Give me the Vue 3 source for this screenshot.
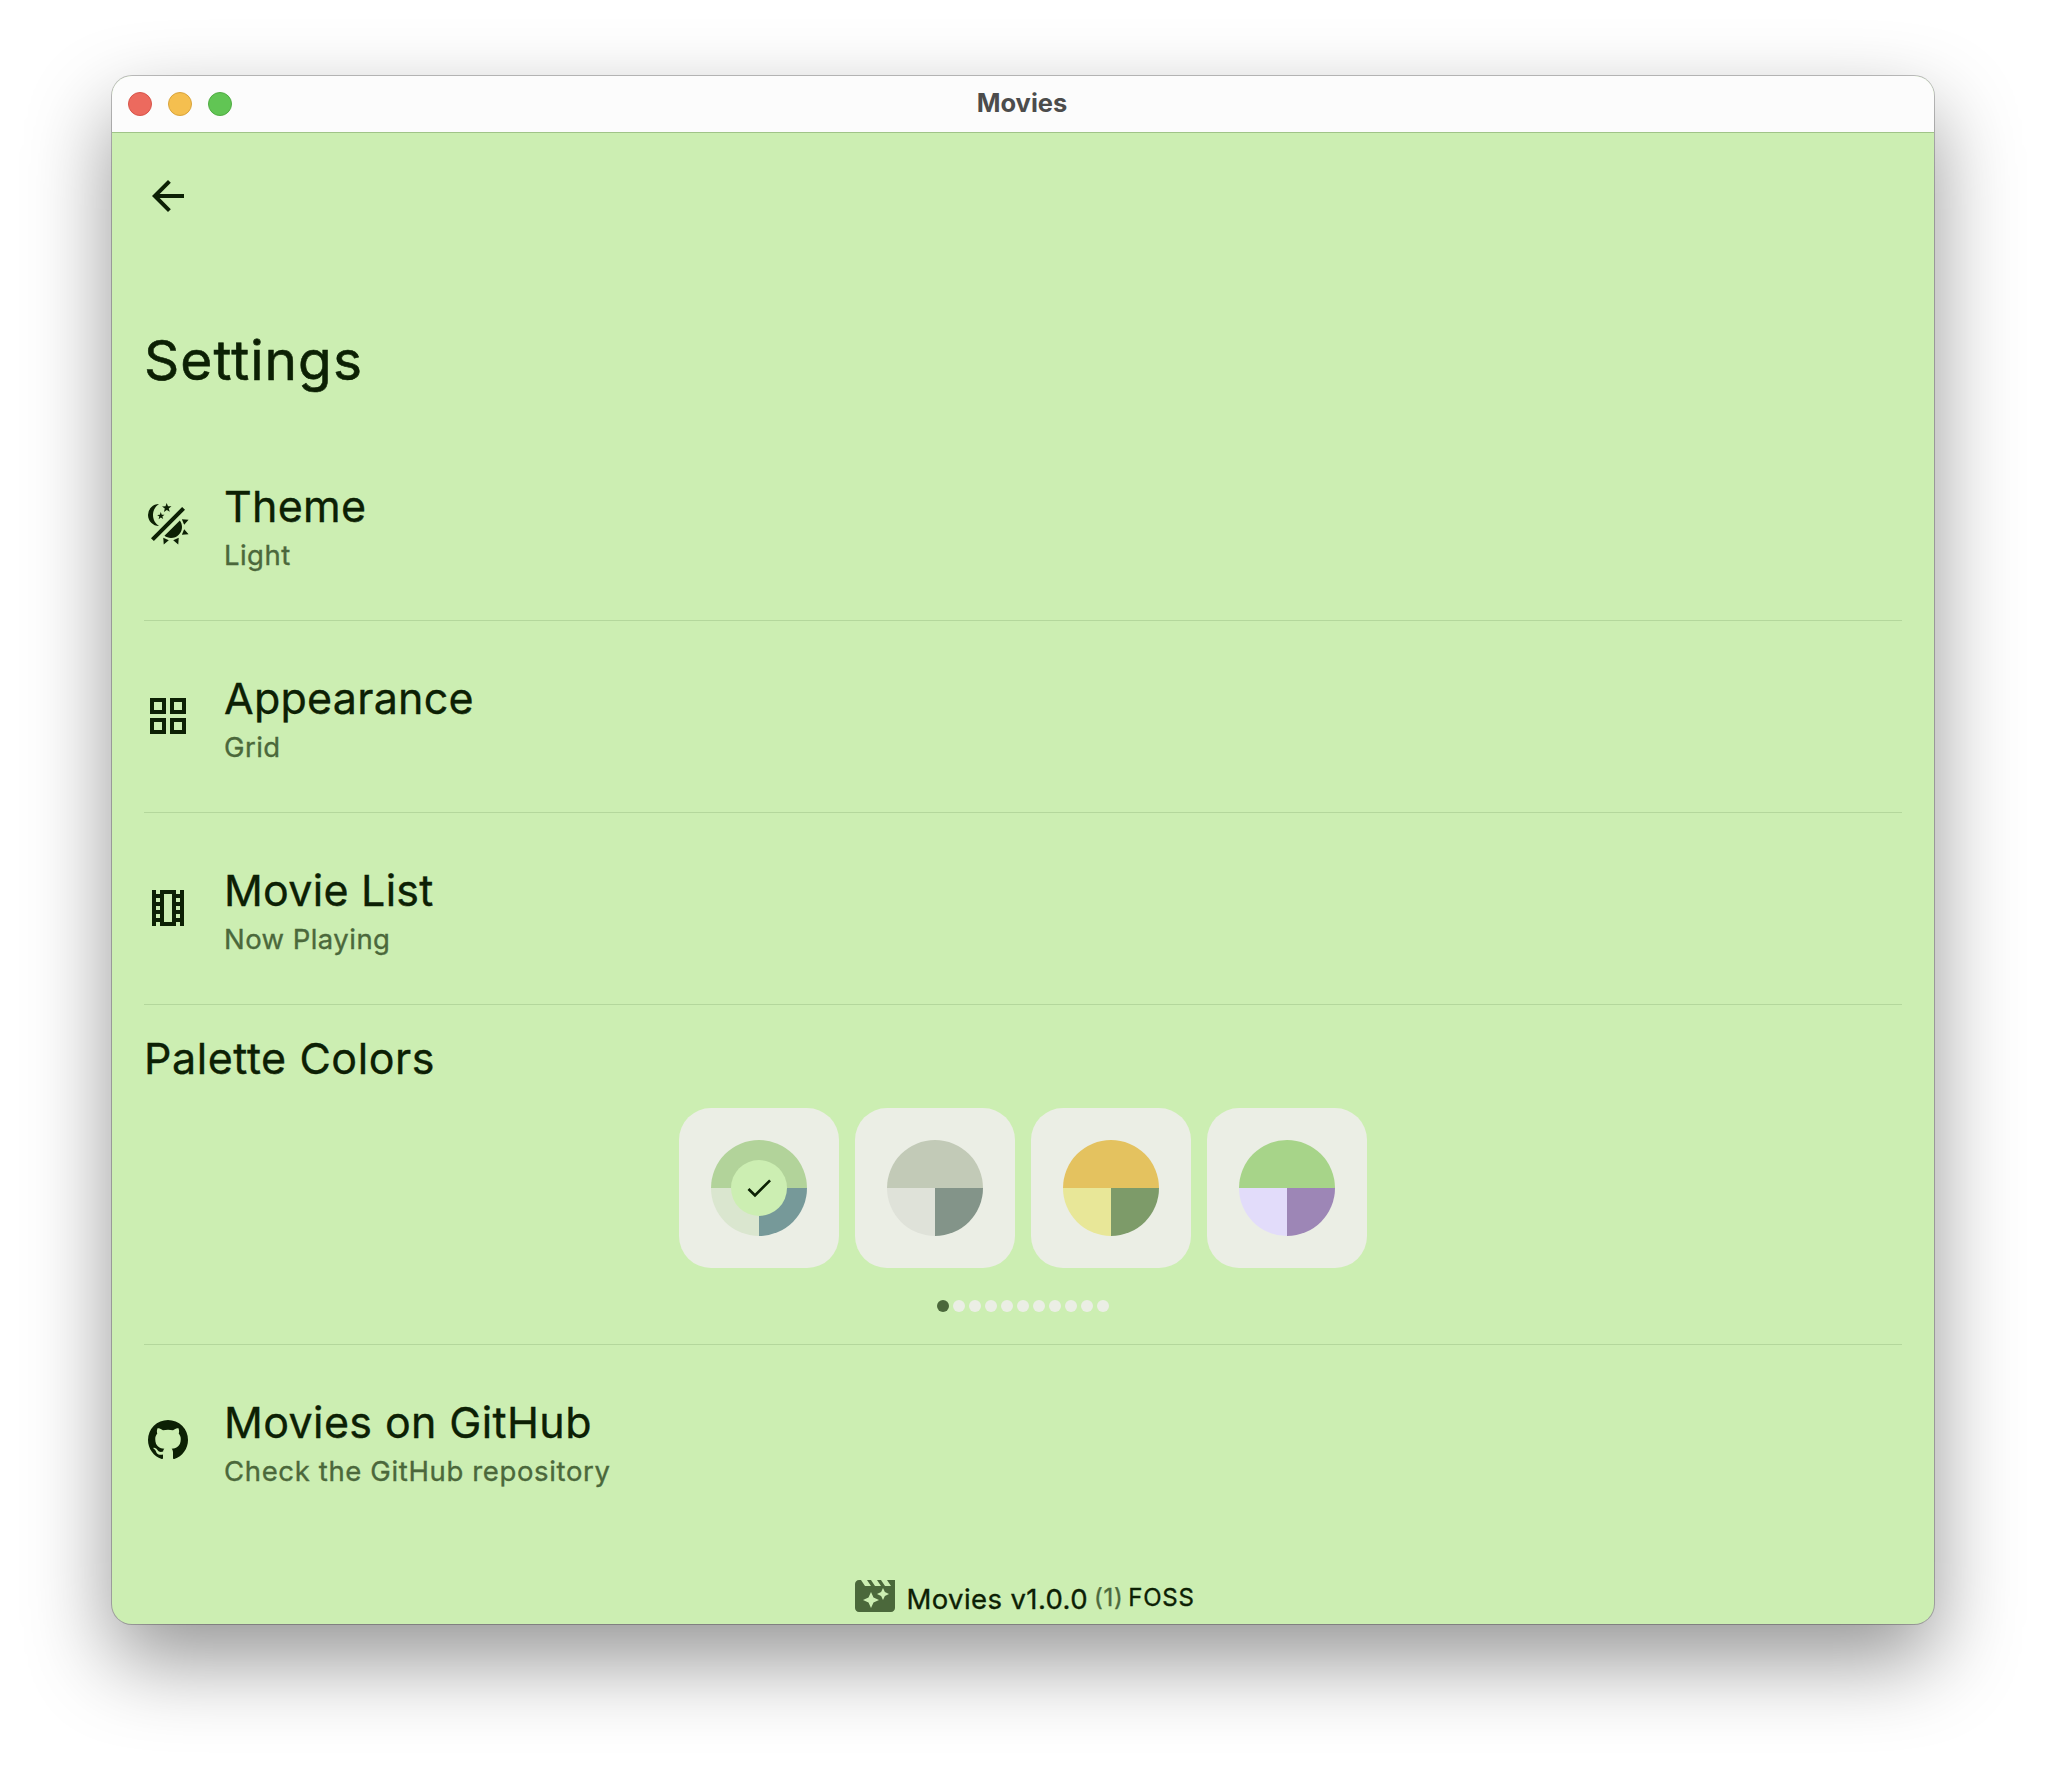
<script setup>
const palettes = [
  { top: '#b2d39a', left: '#dae6cf', right: '#769999', selected: true },
  { top: '#c2cab7', left: '#dfe2d9', right: '#839489' },
  { top: '#e4c25f', left: '#e8e798', right: '#7d9b69' },
  { top: '#a7d489', left: '#e2dcfa', right: '#9d86b6' },
]
const pages = 11
</script>

<template>
  <div class="desktop">
    <main class="window">
      <header class="titlebar">
        <div class="lights"><i class="red"></i><i class="yellow"></i><i class="green"></i></div>
        <span class="title">Movies</span>
      </header>
      <section class="content">
        <nav class="appbar">
          <svg width="48" height="48" viewBox="0 0 24 24"><path d="M20 11H7.83l5.59-5.59L12 4l-8 8 8 8 1.41-1.41L7.83 13H20v-2z" /></svg>
        </nav>
        <h1>Settings</h1>
        <div class="item">
          <svg width="48" height="48" viewBox="0 0 24 24">
            <path d="M7.5 2c-1.79 1.15-3 3.18-3 5.5s1.21 4.35 3.03 5.5C4.46 13 2 10.54 2 7.5A5.5 5.5 0 0 1 7.5 2m11.57 1.5 1.43 1.43L4.93 20.5 3.5 19.07 19.07 3.5m-6.18 2.43L11.41 5 9.97 6l.42-1.7L9 3.24l1.75-.12.58-1.65L12 3.1l1.73.03-1.35 1.13.51 1.67m-3.3 3.61-1.16-.73-1.12.78.34-1.32-1.09-.83 1.36-.09.45-1.29.51 1.27 1.36.03-1.05.87.4 1.31M19 13.5a5.5 5.5 0 0 1-5.5 5.5c-1.22 0-2.35-.4-3.26-1.07l7.69-7.69c.67.91 1.07 2.04 1.07 3.26m-4.4 6.58 2.77-1.15-.24 3.35-2.53-2.2m4.33-2.7 1.15-2.77 2.2 2.54-3.35.23m1.15-4.96-1.14-2.78 3.34.24-2.2 2.54M9.63 18.93l2.77 1.15-2.53 2.19-.24-3.34Z" />
          </svg>
          <div class="labels"><h2>Theme</h2><p>Light</p></div>
        </div>
        <div class="item">
          <svg width="48" height="48" viewBox="0 0 24 24"><path fill-rule="evenodd" d="M3 3v8h8V3H3zm6 6H5V5h4v4zm-6 4v8h8v-8H3zm6 6H5v-4h4v4zm4-16v8h8V3h-8zm6 6h-4V5h4v4zm-6 4v8h8v-8h-8zm6 6h-4v-4h4v4z" /></svg>
          <div class="labels"><h2>Appearance</h2><p>Grid</p></div>
        </div>
        <div class="item">
          <svg width="48" height="48" viewBox="0 0 24 24"><path fill-rule="evenodd" d="M14 5v14h-4V5h4m6-2h-2v2h-2V3H8v2H6V3H4v18h2v-2h2v2h8v-2h2v2h2V3zm-4 6V7h2v2h-2zM6 9V7h2v2H6zm10 4v-2h2v2h-2zM6 13v-2h2v2H6zm10 4v-2h2v2h-2zM6 17v-2h2v2H6z" /></svg>
          <div class="labels"><h2>Movie List</h2><p>Now Playing</p></div>
        </div>
        <section class="palette">
          <h2>Palette Colors</h2>
          <div class="cards">
            <div v-for="(p, i) in palettes" :key="i" class="card">
              <svg width="96" height="96" viewBox="0 0 96 96">
                <path :fill="p.top" d="M0 48a48 48 0 0 1 96 0z" />
                <path :fill="p.left" d="M0 48a48 48 0 0 0 48 48V48z" />
                <path :fill="p.right" d="M96 48a48 48 0 0 1-48 48V48z" />
                <template v-if="p.selected">
                  <circle cx="48" cy="48" r="28" fill="#cceeb2" />
                  <path transform="translate(32 32) scale(1.3333)" d="M9 16.17 4.83 12l-1.42 1.41L9 19 21 7l-1.41-1.41z" />
                </template>
              </svg>
            </div>
          </div>
          <div class="dots"><i v-for="n in pages" :key="n" :class="{ on: n === 1 }"></i></div>
        </section>
        <div class="item last">
          <svg width="48" height="48" viewBox="0 0 24 24"><path d="M12 2A10 10 0 0 0 2 12c0 4.42 2.87 8.17 6.84 9.5.5.08.66-.23.66-.5v-1.69c-2.77.6-3.36-1.34-3.36-1.34-.46-1.16-1.11-1.47-1.11-1.47-.91-.62.07-.6.07-.6 1 .07 1.53 1.03 1.53 1.03.87 1.52 2.34 1.07 2.91.83.09-.65.35-1.09.63-1.34-2.22-.25-4.55-1.11-4.55-4.92 0-1.11.38-2 1.03-2.71-.1-.25-.45-1.29.1-2.64 0 0 .84-.27 2.75 1.02.79-.22 1.65-.33 2.5-.33s1.71.11 2.5.33c1.91-1.29 2.75-1.02 2.75-1.02.55 1.35.2 2.39.1 2.64.65.71 1.03 1.6 1.03 2.71 0 3.82-2.34 4.66-4.57 4.91.36.31.69.92.69 1.85V21c0 .27.16.59.67.5C19.14 20.16 22 16.42 22 12A10 10 0 0 0 12 2z" /></svg>
          <div class="labels"><h2>Movies on GitHub</h2><p>Check the GitHub repository</p></div>
        </div>
        <footer>
          <svg width="40" height="32" viewBox="2 4 20 16">
            <path fill="#4b683b" d="M18 4l2 3h-3l-2-3h-2l2 3h-3l-2-3H8l2 3H7L5 4H4c-1.1 0-1.99.9-1.99 2L2 18c0 1.1.9 2 2 2h16c1.1 0 2-.9 2-2V4h-4zm-6.75 11.25L10 18l-1.25-2.75L6 14l2.75-1.25L10 10l1.25 2.75L14 14l-2.75 1.25zm5.69-3.31L16 14l-.94-2.06L13 11l2.06-.94L16 8l.94 2.06L19 11l-2.06.94z" />
          </svg>
          <span class="ver">Movies v1.0.0</span><span class="build">(1)</span><span class="foss">FOSS</span>
        </footer>
      </section>
    </main>
  </div>
</template>

<style>
body { background: #fff; overflow: hidden; }
</style>

<style scoped>
* { box-sizing: border-box; }
h1, h2, p { margin: 0; font-weight: 400; white-space: nowrap; }
svg { display: block; flex: none; fill: #0c2004; }
.desktop { width: 2046px; height: 1772px; padding: 76px 112px 148px; background: #fff; overflow: hidden; font-family: Inter, "Liberation Sans", sans-serif; color: #0c2004; }
.window { height: 1548px; border-radius: 20px; background: #cceeb2; display: flex; flex-direction: column; box-shadow: 0 0 0 1px rgba(0,0,0,.24), 0 36px 84px rgba(0,0,0,.42); }
.titlebar { height: 57px; flex: none; background: #fcfcfc; border-bottom: 1px solid #a0c488; border-radius: 20px 20px 0 0; display: grid; grid-template-columns: 1fr auto 1fr; align-items: center; padding: 0 16px; }
.lights { display: flex; gap: 16px; }
.lights i { width: 24px; height: 24px; border-radius: 50%; border: 1px solid; }
.lights .red { background: #ec6a5e; border-color: #d8544a; }
.lights .yellow { background: #f5bf4f; border-color: #d9a43c; }
.lights .green { background: #61c554; border-color: #50ac43; }
.title { font-size: 25.5px; font-weight: 700; color: #4c4c4c; line-height: 30px; margin: -2px 2px 0 0; }
.content { flex: 1; padding: 0 32px; display: flex; flex-direction: column; -webkit-text-stroke: .35px currentColor; }
.appbar { height: 127px; padding-top: 39px; }
h1 { font-size: 55px; line-height: 72px; height: 167px; padding-top: 64px; letter-spacing: 1.05px; -webkit-text-stroke-width: .6px; }
.item { height: 192px; border-bottom: 1px solid #b4d79c; padding: 49px 0 0; display: flex; gap: 32px; }
.item:first-of-type { height: 194px; padding-top: 51px; }
.item > svg { margin-top: 22px; }
h2 { font-size: 43px; line-height: 56px; letter-spacing: .26px; }
p { font-size: 27.5px; line-height: 42px; letter-spacing: .45px; color: #4b683b; }
.palette { height: 340px; border-bottom: 1px solid #b4d79c; padding-top: 25px; }
.palette h2 { letter-spacing: .56px; }
.cards { display: flex; justify-content: center; gap: 16px; margin-top: 22px; }
.card { width: 160px; height: 160px; border-radius: 32px; background: #ebeee5; display: grid; place-items: center; }
.dots { display: flex; justify-content: center; gap: 4px; margin-top: 32px; }
.dots i { width: 12px; height: 12px; border-radius: 50%; background: #ebeee5; }
.dots i.on { background: #4b683b; }
.item.last { border: 0; }
.last h2 { letter-spacing: .38px; }
.last p { letter-spacing: .64px; }
footer { flex: 1; display: flex; justify-content: center; align-items: flex-start; padding: 43px 0 0 3px; }
footer span { white-space: pre; }
.ver { font-size: 27.5px; line-height: 38px; margin-left: 12px; letter-spacing: .4px; }
.build { font-size: 24px; line-height: 35px; margin-left: 6px; letter-spacing: .7px; color: #4b683b; }
.foss { font-size: 24px; line-height: 35px; margin-left: 5px; letter-spacing: .7px; }
</style>
